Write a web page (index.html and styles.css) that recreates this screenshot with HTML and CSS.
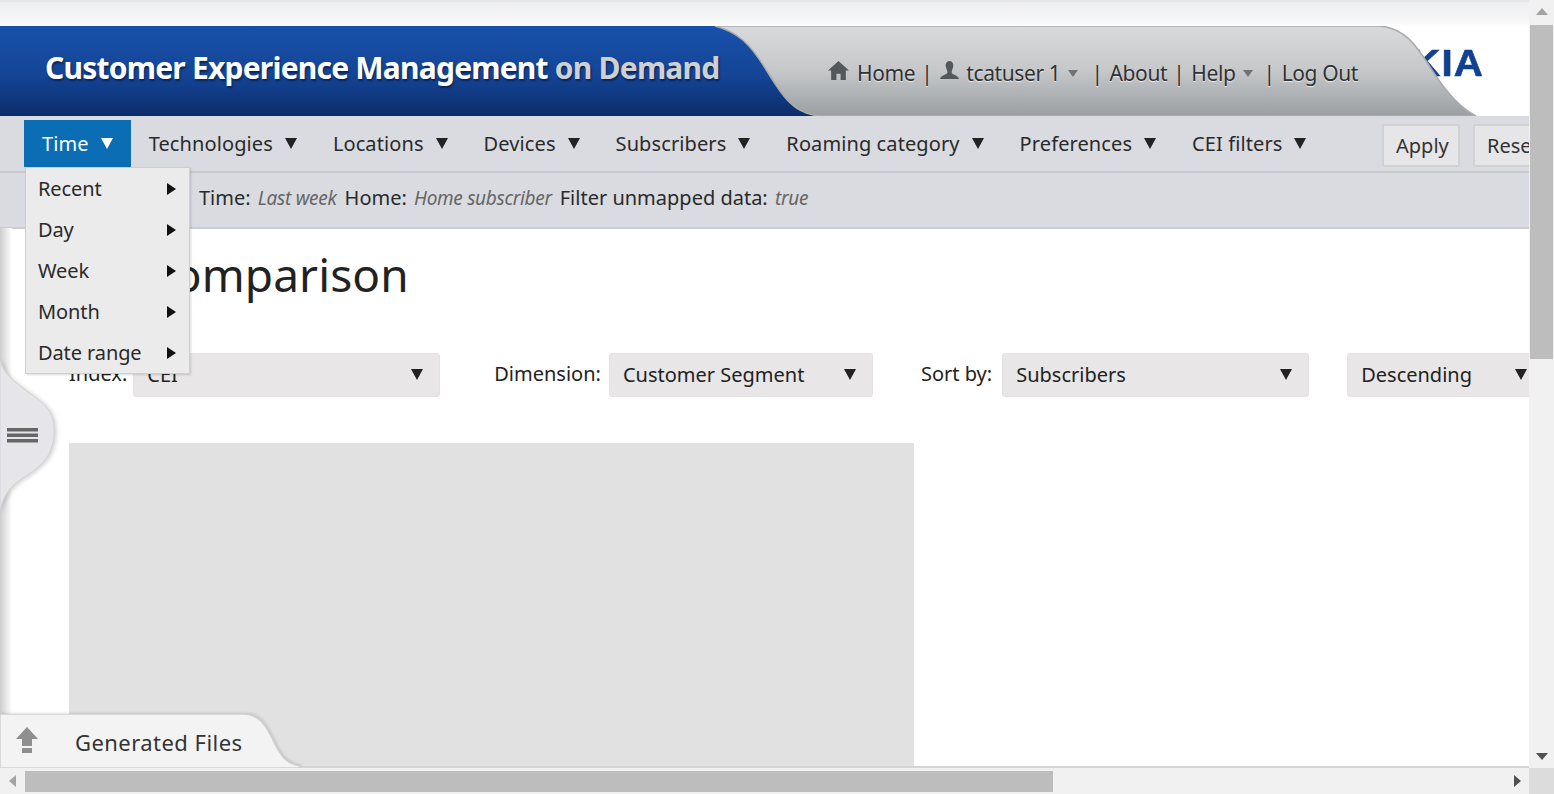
FILE: index.html
```html
<!DOCTYPE html>
<html lang="en">
<head>
  <meta charset="UTF-8">
  <title>Customer Experience Management on Demand</title>
  <link rel="stylesheet" href="styles.css">
</head>
<body>
<div class="window">
  <div class="viewport">
    <div class="top-fade"></div>

    <header class="banner">
      <div class="logo">NOKIA</div>
      <svg class="banner-shape" viewBox="0 0 1529 90" preserveAspectRatio="none">
        <defs>
          <linearGradient id="blue" x1="0" y1="0" x2="0" y2="1">
            <stop offset="0" stop-color="#1851ab"/>
            <stop offset="0.55" stop-color="#144596"/>
            <stop offset="1" stop-color="#0c2c6b"/>
          </linearGradient>
          <linearGradient id="grey" x1="0" y1="0" x2="0" y2="1">
            <stop offset="0" stop-color="#d9dadc"/>
            <stop offset="0.5" stop-color="#c5c7c9"/>
            <stop offset="1" stop-color="#9b9fa2"/>
          </linearGradient>
        </defs>
        <rect x="0" y="0" width="840" height="90" fill="url(#blue)"/>
        <path d="M715 0 H1378 C1410 1 1422 30 1436 50 C1448 68 1460 82 1476 90 H820 C790 88 778 62 765 42 C750 18 738 6 715 0 Z" fill="url(#grey)" stroke="#a9abad" stroke-width="1.5"/>
      </svg>
      <h1 class="product">Customer Experience Management <span>on Demand</span></h1>
      <nav class="user-nav">
        <svg class="nav-icon home-icon" viewBox="0 0 20 20"><path d="M10 1 L20 10 H17 V19 H12 V13 H8 V19 H3 V10 H0 Z"/></svg>
        <a>Home</a><i>|</i>
        <svg class="nav-icon" viewBox="0 0 20 20"><path d="M10 1 C13 1 14 4 13.5 6.5 C13 9 12 10 12 12 C12 14 18 14.500 19 18 H1 C2 14.500 8 14 8 12 C8 10 7 9 6.500 6.500 C6 4 7 1 10 1 Z"/></svg>
        <a>tcatuser 1</a><b class="mini-caret"></b><i class="wide">|</i>
        <a>About</a><i>|</i>
        <a>Help</a><b class="mini-caret"></b><i class="wide tight">|</i>
        <a>Log Out</a>
      </nav>
    </header>

    <div class="toolbar">
      <ul class="menu-bar">
        <li class="active">Time<b class="caret"></b></li>
        <li>Technologies<b class="caret"></b></li>
        <li>Locations<b class="caret"></b></li>
        <li>Devices<b class="caret"></b></li>
        <li>Subscribers<b class="caret"></b></li>
        <li>Roaming category<b class="caret"></b></li>
        <li>Preferences<b class="caret"></b></li>
        <li>CEI filters<b class="caret"></b></li>
      </ul>
      <div class="actions">
        <button class="btn">Apply</button>
        <button class="btn">Reset</button>
      </div>
    </div>

    <div class="summary">
      <span>Time: <em>Last week</em></span>
      <span>Home: <em>Home subscriber</em></span>
      <span>Filter unmapped data: <em>true</em></span>
    </div>

    <main class="content">
      <h2 class="page-title">CEI comparison</h2>
      <div class="filters">
        <label class="field field-index">Index:
          <span class="select select-index">CEI<b class="caret dark"></b></span>
        </label>
        <label class="field field-dimension">Dimension:
          <span class="select select-dimension">Customer Segment<b class="caret dark"></b></span>
        </label>
        <label class="field field-sort">Sort by:
          <span class="select select-sort">Subscribers<b class="caret dark"></b></span>
        </label>
        <span class="select select-order">Descending<b class="caret dark"></b></span>
      </div>
      <div class="chart"></div>
    </main>

    <!-- menu abierto sobre el contenido -->
    <ul class="dropdown">
      <li>Recent<b class="arrow"></b></li>
      <li>Day<b class="arrow"></b></li>
      <li>Week<b class="arrow"></b></li>
      <li>Month<b class="arrow"></b></li>
      <li>Date range<b class="arrow"></b></li>
    </ul>

    <div class="side-shadow"></div>
    <div class="side-handle">
      <svg viewBox="0 0 56 150">
        <path d="M0 0 C4 14 12 20 28 32 C46 44 54 52 54 70 C54 94 44 104 26 116 C12 124 4 134 0 150 Z" fill="#e6e6ea" stroke="#d2d2d5" stroke-width="1"/>
        <rect x="7" y="68" width="31" height="3.500" fill="#666"/>
        <rect x="7" y="73.500" width="31" height="3.500" fill="#666"/>
        <rect x="7" y="79" width="31" height="3.500" fill="#666"/>
      </svg>
    </div>

    <div class="files-tab">
      <svg class="tab-shape" viewBox="0 0 300 54">
        <path d="M0 0 H245 C262 1 268 16 276 32 C282 44 288 50 300 52 V54 H0 Z" fill="#f3f3f3" stroke="#cfcfcf" stroke-width="1.5"/>
      </svg>
      <svg class="tab-icon" viewBox="0 0 22 27"><path d="M11 0 L22 12 H16 V19 H6 V12 H0 Z M6 21 H16 V26 H6 Z" fill="#8f8f8f"/></svg>
      <span class="tab-label">Generated Files</span>
    </div>
  </div>

  <div class="scroll-y">
    <b class="sb-up"></b>
    <div class="sb-thumb-y"></div>
    <b class="sb-down"></b>
  </div>
  <div class="scroll-x">
    <b class="sb-left"></b>
    <div class="sb-thumb-x"></div>
    <b class="sb-right"></b>
  </div>
  <div class="corner"></div>
</div>
</body>
</html>
```

FILE: styles.css
```css
html, body {
  margin: 0;
  height: 100%;
  overflow: hidden;
  background: #fff;
  color: #222;
  font-family: 'Noto Sans', 'Open Sans', sans-serif;
}
ul {
  list-style: none;
  margin: 0;
  padding: 0;
}

.window {
  display: grid;
  grid-template-columns: 1fr 25px;
  grid-template-rows: 1fr 26px;
  height: 794px;
}
.viewport {
  position: relative;
  overflow: hidden;
  min-width: 0;
}
.top-fade {
  height: 26px;
  background: linear-gradient(#eeeff1, #f6f6f7 70%, #fdfdfd);
  border-top: 2px solid #e6e6e6;
  box-sizing: border-box;
}

/* cabecera */
.banner {
  position: relative;
  display: flex;
  align-items: center;
  height: 90px;
}
.banner-shape {
  position: absolute;
  left: 0;
  top: 0;
  width: 100%;
  height: 100%;
}
.product {
  position: relative;
  width: 828px;
  margin: 0 0 8px;
  padding-left: 45px;
  box-sizing: border-box;
  font-size: 30px;
  font-weight: 700;
  letter-spacing: -0.78px;
  color: #fff;
  text-shadow: 1px 2px 2px #0a2358;
  white-space: nowrap;
}
.product span {
  color: #cfd0d2;
}
.user-nav {
  position: relative;
  display: flex;
  align-items: center;
  gap: 6px;
  font-size: 21px;
  letter-spacing: -0.4px;
  color: #2f3133;
  text-shadow: 0 1px 1px #eee;
  white-space: nowrap;
  margin-top: 4px;
}
.user-nav i {
  font-style: normal;
  margin: 0 1px 0 0;
}
.user-nav i.wide {
  margin-left: 7px;
}
.user-nav i.tight {
  margin-left: 4px;
}
.nav-icon {
  width: 21px;
  height: 21px;
  fill: #55585b;
  margin-top: -6px;
}
.home-icon {
  margin-right: 2px;
}
.mini-caret {
  border-left: 5px solid transparent;
  border-right: 5px solid transparent;
  border-top: 7px solid #707376;
  margin-left: 2px;
}
.logo {
  position: absolute;
  right: 45px;
  top: 20px;
  font-family: 'Liberation Sans', sans-serif;
  font-size: 36px;
  line-height: 36px;
  font-weight: 700;
  letter-spacing: 1px;
  color: #124191;
  -webkit-text-stroke: 0.6px #124191;
  transform: scaleX(1.12);
  transform-origin: right;
}

/* barra de menus */
.toolbar {
  display: flex;
  justify-content: space-between;
  background: #d9dbe0;
  border-bottom: 2px solid #c6c8cc;
  padding-left: 24px;
  padding-top: 4px;
  height: 51px;
}
.menu-bar {
  display: flex;
  align-items: flex-start;
}
.menu-bar li {
  display: flex;
  align-items: center;
  gap: 12px;
  height: 47px;
  padding: 0 18px;
  font-size: 20px;
  letter-spacing: 0.1px;
  color: #2a2a2a;
  white-space: nowrap;
}
.menu-bar li.active {
  background: #0b6db3;
  color: #fff;
}
.caret {
  display: inline-block;
  border-left: 6.500px solid transparent;
  border-right: 6.500px solid transparent;
  border-top: 11px solid #222;
}
.active .caret {
  border-top-color: #fff;
}
.actions {
  display: flex;
  gap: 13px;
  flex: none;
  margin: 4px -22px 0 0;
}
.btn {
  width: 78px;
  height: 43px;
  background: #e6e6e8;
  border: 2px solid #cfd1d5;
  border-radius: 2px;
  font: inherit;
  font-size: 20px;
  color: #333;
  text-align: left;
  padding: 0 0 0 12px;
  white-space: nowrap;
}

.summary {
  display: flex;
  align-items: center;
  gap: 8px;
  height: 48px;
  padding: 0 0 6px 199px;
  background: #d9dbe0;
  border-bottom: 2px solid #cbcdd1;
  font-size: 20px;
  color: #2a2a2a;
  white-space: nowrap;
}
.summary em {
  font-size: 19px;
  letter-spacing: -0.3px;
  color: #666;
  margin-left: 2px;
}

/* contenido */
.content {
  padding: 14px 0 0 69px;
}
.page-title {
  margin: 0;
  font-size: 46px;
  font-weight: 400;
  line-height: 62px;
  letter-spacing: 0.1px;
  color: #222;
  white-space: nowrap;
}
.filters {
  display: flex;
  align-items: center;
  margin-top: 48px;
  height: 44px;
  font-size: 20px;
  white-space: nowrap;
}
.field {
  display: flex;
  align-items: center;
  gap: 8px;
  padding-bottom: 4px;
}
.field-index {
  gap: 6px;
}
.field-dimension {
  margin-left: 54px;
}
.field-sort {
  margin-left: 48px;
  gap: 10px;
}
.select {
  display: flex;
  align-items: center;
  justify-content: space-between;
  flex: none;
  height: 44px;
  padding: 0 16px 1px 13px;
  margin-bottom: -4px;
  box-sizing: border-box;
  background: #e8e6e7;
  border: 1px solid #e2e2e2;
  border-radius: 3px;
}
.select-index { width: 307px; }
.select-dimension { width: 264px; }
.select-sort { width: 307px; }
.select-order { width: 197px; margin: 0 0 0 38px; }
.chart {
  width: 845px;
  height: 400px;
  margin-top: 46px;
  background: #e1e1e1;
}

/* desplegable de Time */
.dropdown {
  position: absolute;
  left: 25px;
  top: 167px;
  width: 163px;
  background: #ebebeb;
  border: 1px solid #cfcfd2;
  box-shadow: 1px 1px 2px rgba(0, 0, 0, 0.15);
  font-size: 20px;
  letter-spacing: -0.1px;
}
.dropdown li {
  display: flex;
  align-items: center;
  justify-content: space-between;
  height: 41px;
  padding: 0 13px 0 12px;
  color: #2a2a2a;
}
.arrow {
  border-top: 6.500px solid transparent;
  border-bottom: 6.500px solid transparent;
  border-left: 9px solid #111;
}

.side-shadow {
  position: absolute;
  left: 0;
  top: 228px;
  bottom: 0;
  width: 12px;
  background: linear-gradient(to right, #cdcdcd, #fff);
}
.side-handle {
  position: absolute;
  left: 0;
  top: 360px;
  width: 56px;
  height: 150px;
  filter: drop-shadow(2px 1px 2px rgba(0, 0, 0, 0.18));
}
.side-handle svg {
  display: block;
  width: 100%;
  height: 100%;
}

.files-tab {
  position: absolute;
  left: 0;
  bottom: 0;
  right: 0;
  height: 54px;
  border-bottom: 2px solid #d4d4d4;
  box-sizing: border-box;
  display: flex;
  align-items: center;
}
.tab-shape {
  position: absolute;
  left: 0;
  top: 0;
  width: 300px;
  height: 54px;
  filter: drop-shadow(1px -1px 1px rgba(0, 0, 0, 0.12));
}
.tab-icon {
  position: relative;
  width: 22px;
  height: 27px;
  margin-left: 16px;
}
.tab-label {
  position: relative;
  margin: 4px 0 0 37px;
  font-size: 22px;
  letter-spacing: 0.45px;
  color: #333;
}

/* barras de scroll */
.scroll-y, .scroll-x {
  display: flex;
  align-items: center;
  justify-content: space-between;
  background: #f1f1f1;
}
.scroll-y {
  flex-direction: column;
}
.sb-thumb-y {
  width: 23px;
  height: 334px;
  background: #bdbdbd;
  margin-bottom: auto;
}
.sb-up, .sb-down {
  flex: none;
  border-left: 6px solid transparent;
  border-right: 6px solid transparent;
}
.sb-up {
  margin: 8px 0 10px;
  border-bottom: 7px solid #a3a3a3;
}
.sb-down {
  margin-bottom: 8px;
  border-top: 7px solid #505050;
}
.sb-thumb-x {
  width: 1028px;
  height: 21px;
  background: #bdbdbd;
  margin-right: auto;
  margin-left: 9px;
}
.sb-left, .sb-right {
  flex: none;
  border-top: 6px solid transparent;
  border-bottom: 6px solid transparent;
}
.sb-left {
  margin-left: 9px;
  border-right: 7px solid #a3a3a3;
}
.sb-right {
  margin-right: 8px;
  border-left: 7px solid #505050;
}
.corner {
  background: #dcdcdc;
}
```
